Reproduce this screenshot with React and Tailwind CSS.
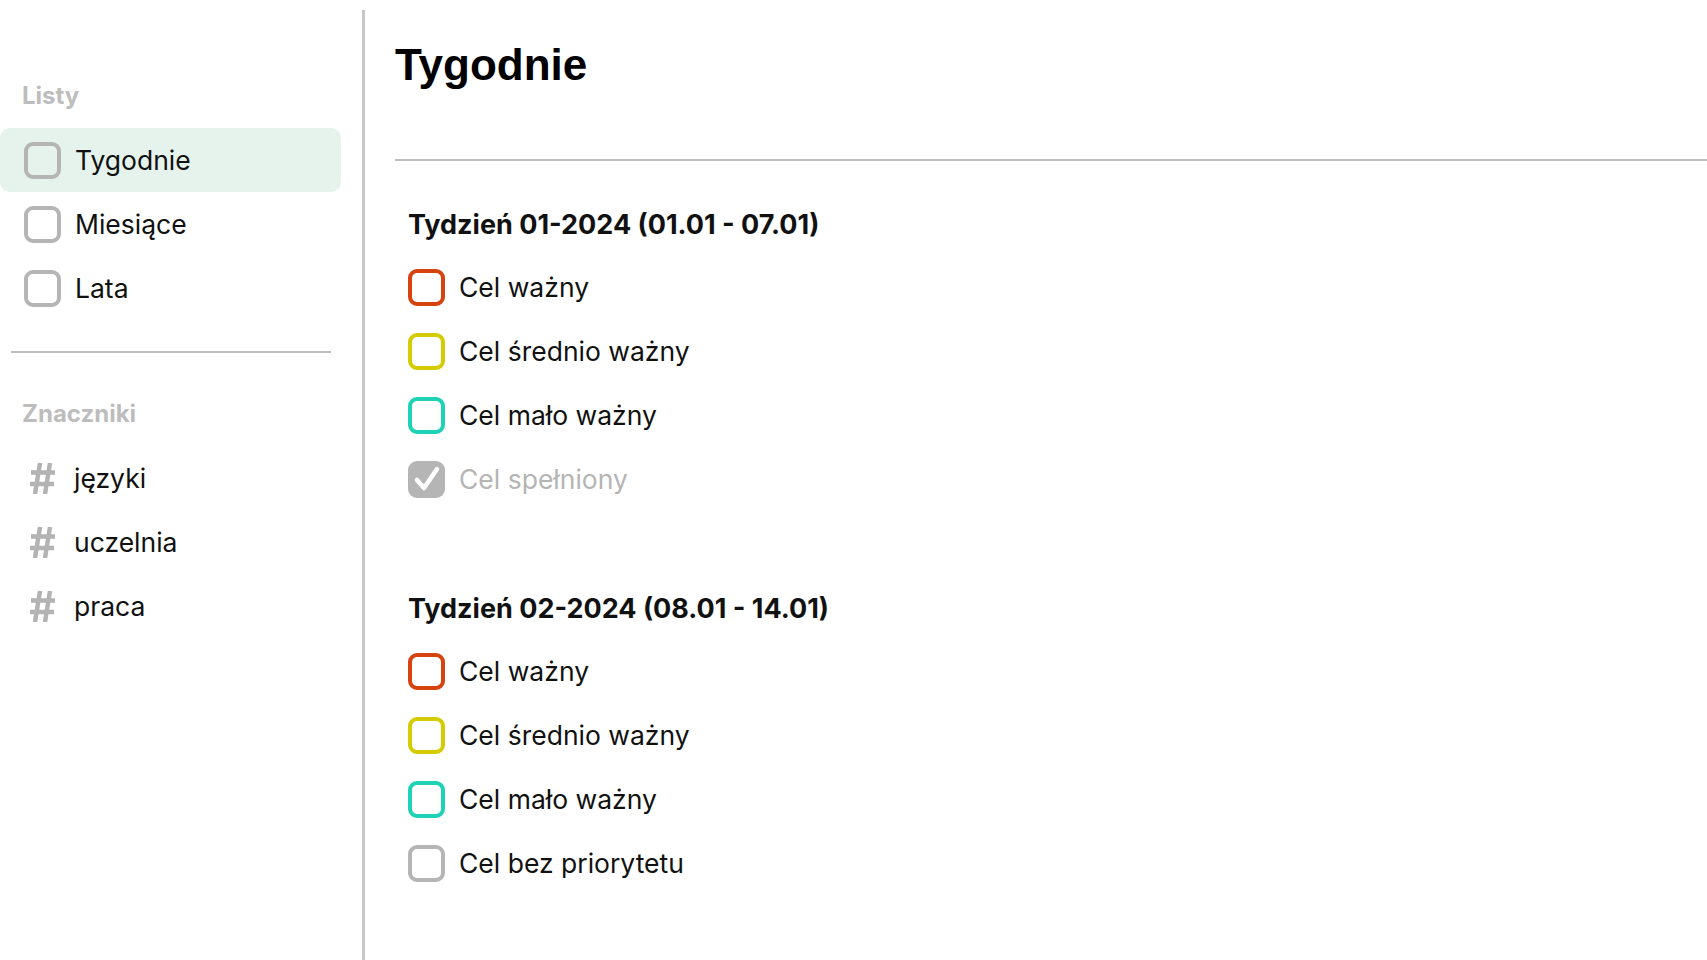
import React from 'react';

const LISTS = [
  { id: 'weeks', label: 'Tygodnie', active: true },
  { id: 'months', label: 'Miesiące' },
  { id: 'years', label: 'Lata' },
];

const TAGS = ['języki', 'uczelnia', 'praca'];

// priority → border colour of the checkbox
const PRIORITY = {
  high: 'border-[#d6430f]',
  mid: 'border-[#d4cb00]',
  low: 'border-[#1ed2b6]',
  none: 'border-[#b5b5b5]',
};

const WEEKS = [
  {
    title: 'Tydzień 01-2024 (01.01 - 07.01)',
    goals: [
      { text: 'Cel ważny', priority: 'high' },
      { text: 'Cel średnio ważny', priority: 'mid' },
      { text: 'Cel mało ważny', priority: 'low' },
      { text: 'Cel spełniony', done: true },
    ],
  },
  {
    title: 'Tydzień 02-2024 (08.01 - 14.01)',
    goals: [
      { text: 'Cel ważny', priority: 'high' },
      { text: 'Cel średnio ważny', priority: 'mid' },
      { text: 'Cel mało ważny', priority: 'low' },
      { text: 'Cel bez priorytetu', priority: 'none' },
    ],
  },
];

const Box = ({ color = 'border-[#b5b5b5]' }) => (
  <span className={`block w-[37px] h-[37px] shrink-0 rounded-[9px] border-[4px] ${color}`} />
);

const CheckedBox = () => (
  <span className="flex w-[37px] h-[37px] shrink-0 rounded-[9px] bg-[#b5b5b5] items-center justify-center">
    <svg width="28" height="28" viewBox="0 0 28 28" fill="none">
      <path d="M4 15l7 8L24 4" stroke="white" strokeWidth="4.5" strokeLinecap="round" strokeLinejoin="round" />
    </svg>
  </span>
);

const Hash = () => (
  <svg width="26" height="33" viewBox="0 0 26 33" className="shrink-0" stroke="#b3b3b3" strokeWidth="4.5">
    <path d="M10 1L5 32M20 1L15 32M1 10.5H25M0 22H24" />
  </svg>
);

const Sidebar = () => (
  <aside className="w-[365px] shrink-0 mt-[10px] border-r-[3px] border-[#c8c8c8] pt-[72px]">
    <div className="pl-[22px] text-[24px] leading-[28px] font-bold text-[#bdbdbd]">Listy</div>
    <ul className="mt-[18px] w-[341px]">
      {LISTS.map(l => (
        <li
          key={l.id}
          className={`h-[64px] flex items-center gap-[14px] pl-[24px] rounded-[10px] ${l.active ? 'bg-[#e6f3ec]' : ''}`}
        >
          <Box />
          <span className="text-[26.5px] pt-[2px] text-[#111]">{l.label}</span>
        </li>
      ))}
    </ul>

    <div className="mt-[31px] ml-[11px] w-[320px] h-[2px] bg-[#bdbdbd]" />

    <div className="mt-[47px] pl-[22px] text-[24px] leading-[28px] font-bold text-[#bdbdbd]">Znaczniki</div>
    <ul className="mt-[18px]">
      {TAGS.map(t => (
        <li key={t} className="h-[64px] flex items-center gap-[18px] pl-[30px]">
          <Hash />
          <span className="text-[26.5px] pt-[2px] text-[#111]">{t}</span>
        </li>
      ))}
    </ul>
  </aside>
);

const Week = ({ week }) => (
  <section className="pl-[13px]">
    <h2 className="h-[64px] pt-[4px] flex items-center text-[27px] font-bold text-[#111]">{week.title}</h2>
    <ul>
      {week.goals.map((g, i) => (
        <li key={i} className="h-[64px] flex items-center gap-[14px]">
          {g.done ? <CheckedBox /> : <Box color={PRIORITY[g.priority]} />}
          <span className={`text-[26.5px] pt-[2px] ${g.done ? 'text-[#b5b5b5]' : 'text-[#111]'}`}>{g.text}</span>
        </li>
      ))}
    </ul>
  </section>
);

export default function App() {
  return (
    <div className="flex h-screen bg-white overflow-hidden" style={{ fontFamily: 'Inter, "Noto Sans", sans-serif' }}>
      <Sidebar />
      <main className="flex-1 pl-[30px] pt-[43px]">
        <h1 className="text-[44px] leading-none font-bold text-black" style={{ fontFamily: '"Liberation Sans", Arial, sans-serif' }}>
          Tygodnie
        </h1>
        <div className="mt-[72px] h-[2px] bg-[#bdbdbd]" />
        <div className="mt-[30px] flex flex-col gap-[64px]">
          {WEEKS.map(w => <Week key={w.title} week={w} />)}
        </div>
      </main>
    </div>
  );
}
